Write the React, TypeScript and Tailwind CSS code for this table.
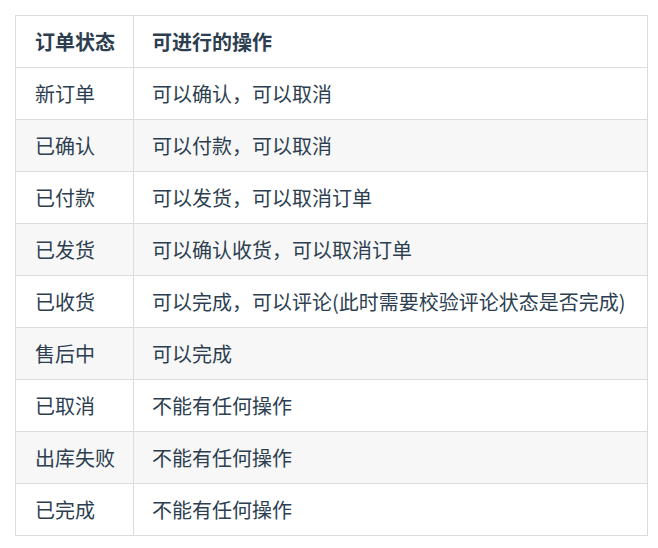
import React from "react";

const rows: [string, string][] = [
  ["新订单", "可以确认，可以取消"],
  ["已确认", "可以付款，可以取消"],
  ["已付款", "可以发货，可以取消订单"],
  ["已发货", "可以确认收货，可以取消订单"],
  ["已收货", "可以完成，可以评论(此时需要校验评论状态是否完成)"],
  ["售后中", "可以完成"],
  ["已取消", "不能有任何操作"],
  ["出库失败", "不能有任何操作"],
  ["已完成", "不能有任何操作"],
];

export default function App() {
  return (
    <div
      className="w-[658px] h-[548px] bg-white pt-[15px] pl-[15px]"
      style={{ fontFamily: '"Noto Sans CJK SC", "Noto Sans", sans-serif' }}
    >
      <table className="border-collapse w-[633px] text-[20px] text-[#2c3e50]">
        <thead>
          <tr>
            <th className="w-[118px] border border-[#dcdcdc] text-left font-bold pl-[19px] pr-2 py-[12px] leading-[27px]">
              订单状态
            </th>
            <th className="border border-[#dcdcdc] text-left font-bold pl-[18px] pr-2 py-[12px] leading-[27px]">
              可进行的操作
            </th>
          </tr>
        </thead>
        <tbody>
          {rows.map(([a, b], i) => (
            <tr key={i} className={i % 2 === 1 ? "bg-[#f7f7f7]" : "bg-white"}>
              <td className="border border-[#dcdcdc] pl-[19px] pr-2 py-[12px] leading-[27px] whitespace-nowrap">
                {a}
              </td>
              <td className="border border-[#dcdcdc] pl-[18px] pr-2 py-[12px] leading-[27px] whitespace-nowrap">
                {b}
              </td>
            </tr>
          ))}
        </tbody>
      </table>
    </div>
  );
}
